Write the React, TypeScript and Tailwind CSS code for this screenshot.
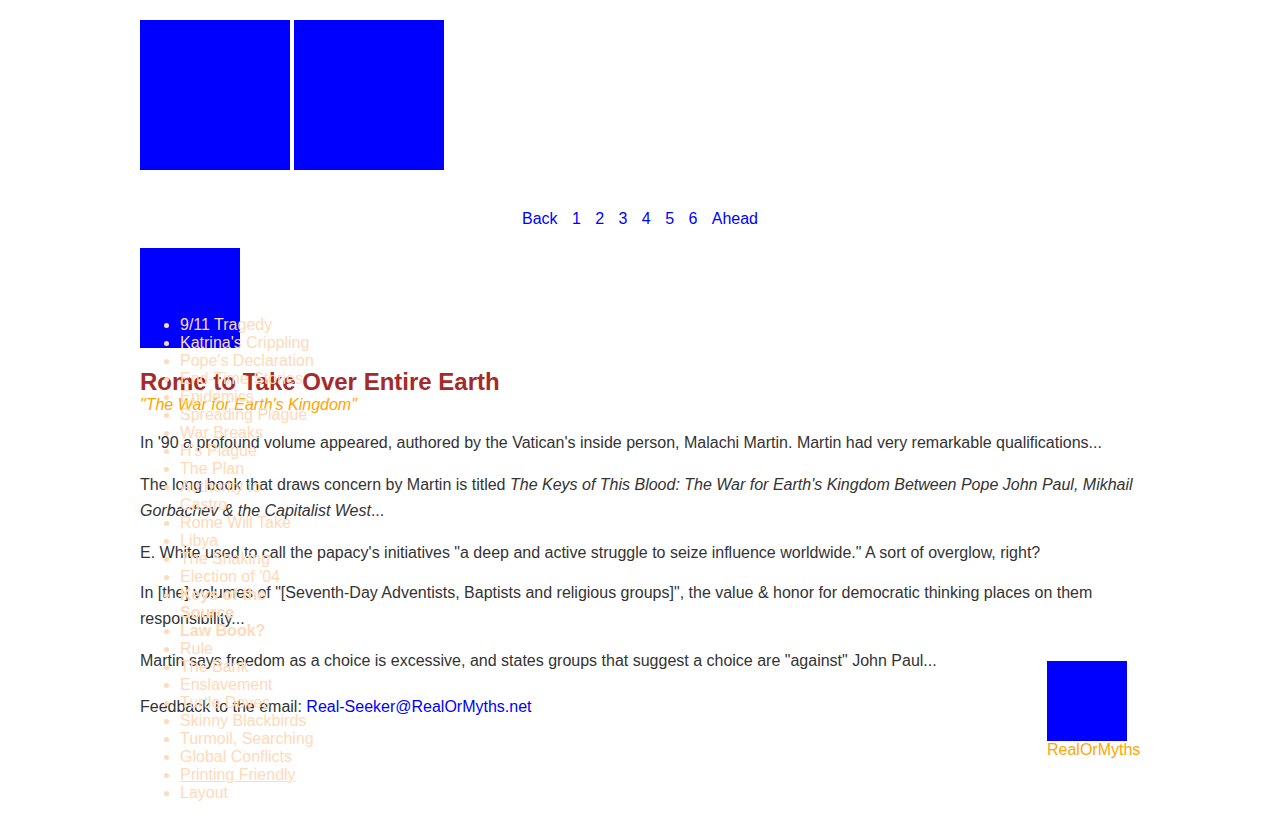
const pages = ["Back", "1", "2", "3", "4", "5", "6", "Ahead"];

const sideLinks: [string, string][] = [
  ["9/11 Tragedy", ""],
  ["Katrina's Crippling", ""],
  ["Pope's Declaration", ""],
  ["End-Time Stories", ""],
  ["Epidemics", ""],
  ["Spreading Plague", ""],
  ["War Breaks", ""],
  ["H's Plague", ""],
  ["The Plan", ""],
  ["Authority to|Castro", ""],
  ["Rome Will Take", ""],
  ["Libya", ""],
  ["The Shaking", ""],
  ["Election of '04", ""],
  ["Keys of the Source", "font-bold"],
  ["Law Book?", "font-bold"],
  ["Rule", ""],
  ["The Bank", ""],
  ["Enslavement", ""],
  ["Turtle Doves", ""],
  ["Skinny Blackbirds", ""],
  ["Turmoil, Searching", ""],
  ["Global Conflicts", ""],
  ["Printing Friendly", "underline"],
  ["Layout", ""],
];

export default function App() {
  return (
    <div className="min-h-[818px] bg-white font-['Liberation_Sans',Arial,sans-serif] text-[16px] text-[#333]">
      <div className="relative mx-auto w-[1000px] pt-5 pb-10">
        {/* banner images */}
        <div className="flex gap-1">
          <div className="h-[150px] w-[150px] bg-[#0000ff]" />
          <div className="h-[150px] w-[150px] bg-[#0000ff]" />
        </div>

        {/* pager */}
        <div className="mt-[40px] flex justify-center gap-[14.4px] leading-[18px] text-[#0000ff]">
          {pages.map((p) => (
            <a key={p} href="#">
              {p}
            </a>
          ))}
        </div>

        <div className="mt-[20px] h-[100px] w-[100px] bg-[#0000ff]" />

        <h1 className="mt-[20px] text-[24px] leading-[28px] font-bold text-[#a52a2a]">
          Rome to Take Over Entire Earth
        </h1>
        <p className="text-[16px] leading-[18px] italic text-[#ffa500]">
          "The War for Earth's Kingdom"
        </p>

        <div className="leading-[26px]">
          <p className="mt-4">
            In '90 a profound volume appeared, authored by the Vatican's inside person, Malachi
            Martin. Martin had very remarkable qualifications...
          </p>
          <p className="mt-4">
            The long book that draws concern by Martin is titled{" "}
            <i>
              The Keys of This Blood: The War for Earth's Kingdom Between Pope John Paul, Mikhail
              Gorbachev &amp; the Capitalist West
            </i>
            ...
          </p>
          <p className="mt-4">
            E. White used to call the papacy's initiatives "a deep and active struggle to seize
            influence worldwide." A sort of overglow, right?
          </p>
          <p className="mt-[14px]">
            In [the] volumes of "[Seventh-Day Adventists, Baptists and religious groups]", the
            value &amp; honor for democratic thinking places on them responsibility...
          </p>
          <p className="mt-4">
            Martin says freedom as a choice is excessive, and states groups that suggest a choice
            are "against" John Paul...
          </p>
        </div>

        <div className="flex items-start justify-between">
          <p className="mt-5 leading-[26px]">
            Feedback to the email:{" "}
            <a href="#" className="text-[#0000ff]">
              Real-Seeker@RealOrMyths.net
            </a>
          </p>
          <div className="-mt-[13px] w-[93px]">
            <div className="h-[80px] w-[80px] bg-[#0000ff]" />
            <div className="leading-[18px] text-[#ffa500]">RealOrMyths</div>
          </div>
        </div>

        {/* side menu, drawn over the article */}
        <ul className="absolute top-[316px] left-0 w-[176px] list-disc pl-10 leading-[18px] text-[#ffdab9]">
          {sideLinks.map(([label, cls]) => {
            const [first, second] = label.split("|");
            return (
              <li key={label} className={cls}>
                {first}
                {second && (
                  <>
                    <br />
                    {second}
                  </>
                )}
              </li>
            );
          })}
        </ul>
      </div>
    </div>
  );
}
